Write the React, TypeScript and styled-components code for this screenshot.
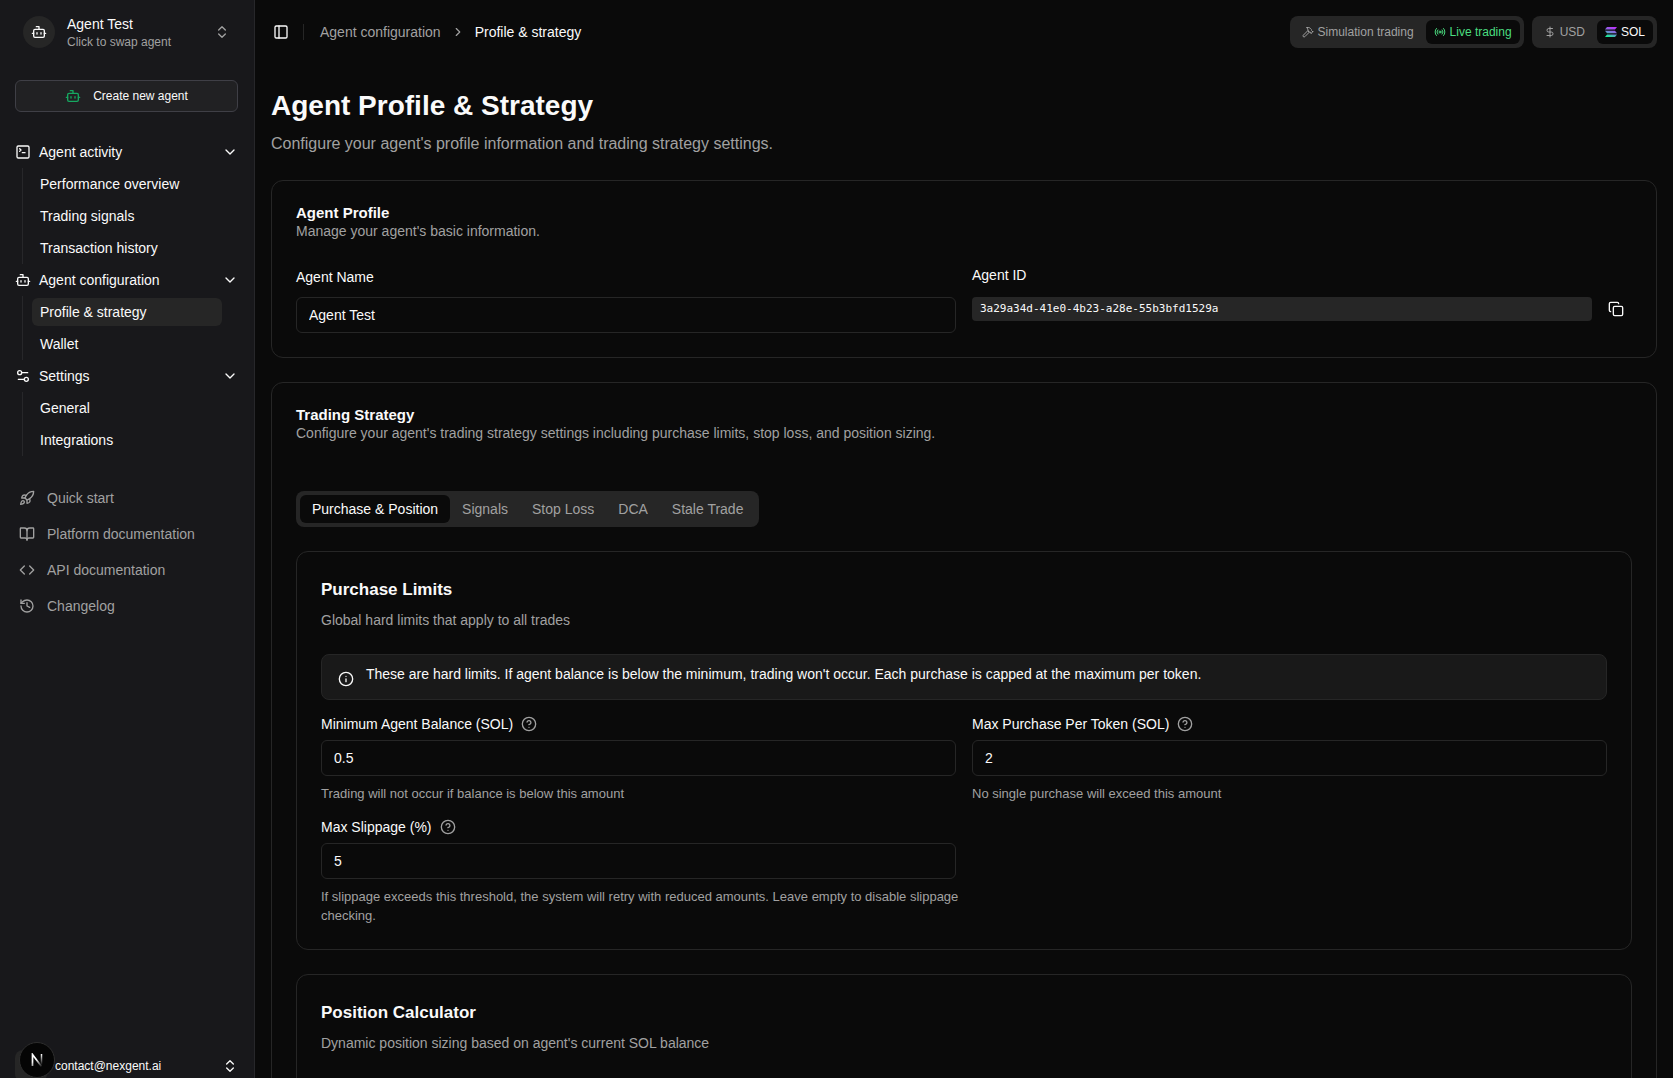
import React, { useState } from "react";
import styled, { createGlobalStyle, css } from "styled-components";
import {
  BookOpen,
  Bot,
  ChevronDown,
  ChevronRight,
  ChevronsUpDown,
  CircleHelp,
  Code,
  Copy,
  DollarSign,
  Hammer,
  History,
  Info,
  PanelLeft,
  Radio,
  Rocket,
  Settings2,
  SquareTerminal,
} from "lucide-react";

const color = {
  page: "#0a0a0a",
  sidebar: "#18181b",
  sidebarBorder: "#27272a",
  border: "#262626",
  muted: "#262626",
  text: "#fafafa",
  dim: "#a1a1a1",
  green: "#4ade80",
};

const GlobalStyle = createGlobalStyle`
  *, *::before, *::after { box-sizing: border-box; }
  body {
    margin: 0;
    background: ${color.page};
    color: ${color.text};
    font-family: "Liberation Sans", Arial, sans-serif;
    font-size: 14px;
    line-height: 20px;
  }
  h1, h2, h3, p, ul { margin: 0; padding: 0; }
  ul { list-style: none; }
  a { color: inherit; text-decoration: none; }
  button, input { font: inherit; color: inherit; }
  button { border: 0; padding: 0; background: none; cursor: pointer; }
  svg { flex: none; display: block; }
`;

const Shell = styled.div`
  display: flex;
  height: 100vh;
  overflow: hidden;
`;

/* Sidebar */

const Sidebar = styled.aside`
  display: flex;
  flex-direction: column;
  flex: none;
  width: 255px;
  padding: 8px 16px 0 15px;
  overflow: hidden;
  background: ${color.sidebar};
  border-right: 1px solid ${color.sidebarBorder};
`;

const AgentSwitcher = styled.button`
  display: flex;
  align-items: center;
  gap: 12px;
  width: 100%;
  height: 48px;
  padding: 0 8px;
  text-align: left;
  > svg { color: ${color.dim}; }
`;

const AgentAvatar = styled.span`
  display: grid;
  place-items: center;
  width: 32px;
  height: 32px;
  border-radius: 50%;
  background: ${color.muted};
`;

const AgentText = styled.span`
  display: flex;
  flex-direction: column;
  flex: 1;
  small {
    font-size: 12px;
    line-height: 16px;
    color: ${color.dim};
  }
`;

const CreateButton = styled.button`
  display: flex;
  align-items: center;
  justify-content: center;
  gap: 12px;
  flex: none;
  height: 32px;
  margin: 24px 0;
  font-size: 12px;
  border: 1px solid #3f3f46;
  border-radius: 6px;
  background: #212123;
  svg { color: #16a860; }
`;

const NavHeader = styled.button`
  display: flex;
  align-items: center;
  gap: 8px;
  width: 100%;
  height: 32px;
  text-align: left;
  span { flex: 1; }
`;

const SubNav = styled.ul`
  display: flex;
  flex-direction: column;
  gap: 4px;
  margin: 0 16px 0 7px;
  padding: 2px 0 2px 9px;
  border-left: 1px solid ${color.sidebarBorder};
`;

const SubLink = styled.a<{ $active?: boolean }>`
  display: flex;
  align-items: center;
  height: 28px;
  padding: 0 8px;
  border-radius: 6px;
  background: ${(p) => (p.$active ? color.muted : "transparent")};
`;

const HelpLinks = styled.nav`
  display: flex;
  flex-direction: column;
  gap: 4px;
  margin-top: 26px;
  color: ${color.dim};
`;

const HelpLink = styled.a`
  display: flex;
  align-items: center;
  gap: 12px;
  height: 32px;
  padding: 0 4px;
`;

const Account = styled.button`
  display: flex;
  align-items: center;
  gap: 8px;
  flex: none;
  height: 24px;
  margin-top: auto;
  font-size: 12px;
  text-align: left;
  > span:nth-child(2) { flex: 1; }
`;

const AccountAvatar = styled.span`
  flex: none;
  width: 32px;
  height: 32px;
  border-radius: 8px;
  background: ${color.muted};
`;

const DevBadge = styled.button`
  position: fixed;
  left: 19px;
  bottom: 0;
  display: grid;
  place-items: center;
  width: 36px;
  height: 36px;
  border: 1px solid #2e2e2e;
  border-radius: 50%;
  background: #050505;
`;

/* Top bar */

const Main = styled.div`
  flex: 1;
  min-width: 0;
  overflow-y: auto;
  scrollbar-width: none;
`;

const TopBar = styled.header`
  display: flex;
  align-items: center;
  height: 64px;
  padding: 0 16px 0 12px;
`;

const IconButton = styled.button<{ $size: number }>`
  display: grid;
  place-items: center;
  flex: none;
  width: ${(p) => p.$size}px;
  height: ${(p) => p.$size}px;
  border-radius: 6px;
`;

const Divider = styled.span`
  width: 1px;
  height: 16px;
  margin: 0 16px 0 8px;
  background: ${color.border};
`;

const Breadcrumb = styled.nav`
  display: flex;
  align-items: center;
  gap: 10px;
  flex: 1;
  color: ${color.dim};
  > span { color: ${color.text}; }
`;

const Segments = styled.div`
  display: flex;
  gap: 4px;
  height: 32px;
  margin-left: 8px;
  padding: 4px;
  border-radius: 8px;
  background: ${color.muted};
`;

const Segment = styled.button<{ $active?: boolean; $tone?: string }>`
  display: flex;
  align-items: center;
  gap: 4px;
  padding: 0 8px;
  font-size: 12px;
  border-radius: 6px;
  color: ${color.dim};
  ${(p) =>
    p.$active &&
    css`
      background: ${color.page};
      color: ${p.$tone ?? color.text};
    `}
`;

/* Content */

const Content = styled.main`
  display: flex;
  flex-direction: column;
  gap: 24px;
  padding: 24px 16px;
`;

const PageTitle = styled.h1`
  font-size: 28px;
  line-height: 36px;
  font-weight: 700;
`;

const PageLead = styled.p`
  margin-top: 8px;
  font-size: 16px;
  line-height: 24px;
  color: ${color.dim};
`;

const Card = styled.section`
  padding: 24px;
  border: 1px solid ${color.border};
  border-radius: 12px;
`;

const CardTitle = styled.h2`
  font-size: 15px;
  line-height: 16px;
  font-weight: 700;
`;

const PanelTitle = styled.h3`
  margin-bottom: 6px;
  font-size: 17px;
  line-height: 28px;
  font-weight: 700;
`;

const Description = styled.p`
  margin-bottom: 24px;
  color: ${color.dim};
`;

const Columns = styled.div`
  display: grid;
  grid-template-columns: 1fr 1fr;
  gap: 16px;
`;

const Field = styled.div`
  display: flex;
  flex-direction: column;
  gap: 8px;
  min-width: 0;
`;

const NameLabel = styled.label`
  line-height: 24px;
`;

const LabelRow = styled.div`
  display: flex;
  align-items: center;
  gap: 8px;
  height: 16px;
  svg { color: ${color.dim}; }
`;

const TextInput = styled.input`
  width: 100%;
  height: 36px;
  padding: 0 12px;
  border: 1px solid ${color.border};
  border-radius: 6px;
  background: transparent;
  outline: none;
`;

/* Hints may run a little into the column gap before they wrap. */
const Hint = styled.p`
  margin-right: -8px;
  font-size: 13px;
  line-height: 19px;
  color: ${color.dim};
`;

const IdRow = styled.div`
  display: flex;
  align-items: center;
  gap: 8px;
  height: 32px;
`;

const AgentId = styled.code`
  flex: 1;
  min-width: 0;
  padding: 4px 8px;
  font-family: "DejaVu Sans Mono", monospace;
  font-size: 11px;
  line-height: 16px;
  border-radius: 4px;
  background: ${color.muted};
`;

const Tabs = styled.div`
  display: inline-flex;
  height: 36px;
  margin: 24px 0;
  padding: 4px;
  border-radius: 8px;
  background: ${color.muted};
`;

const Tab = styled.button<{ $active: boolean }>`
  padding: 0 12px;
  border-radius: 6px;
  background: ${(p) => (p.$active ? color.page : "transparent")};
  color: ${(p) => (p.$active ? color.text : color.dim)};
`;

const Panels = styled.div`
  display: flex;
  flex-direction: column;
  gap: 24px;
`;

const Notice = styled.div`
  display: flex;
  gap: 12px;
  min-height: 46px;
  margin-bottom: 16px;
  padding: 9px 16px 12px;
  border: 1px solid ${color.border};
  border-radius: 8px;
  background: #191919;
  svg { align-self: flex-end; }
`;

const navigation = [
  {
    title: "Agent activity",
    icon: SquareTerminal,
    items: ["Performance overview", "Trading signals", "Transaction history"],
  },
  {
    title: "Agent configuration",
    icon: Bot,
    items: ["Profile & strategy", "Wallet"],
  },
  { title: "Settings", icon: Settings2, items: ["General", "Integrations"] },
];

const helpLinks = [
  { title: "Quick start", icon: Rocket },
  { title: "Platform documentation", icon: BookOpen },
  { title: "API documentation", icon: Code },
  { title: "Changelog", icon: History },
];

const tabNames = ["Purchase & Position", "Signals", "Stop Loss", "DCA", "Stale Trade"];

const limits = [
  {
    id: "min-balance",
    label: "Minimum Agent Balance (SOL)",
    value: "0.5",
    hint: "Trading will not occur if balance is below this amount",
  },
  {
    id: "max-purchase",
    label: "Max Purchase Per Token (SOL)",
    value: "2",
    hint: "No single purchase will exceed this amount",
  },
  {
    id: "max-slippage",
    label: "Max Slippage (%)",
    value: "5",
    hint: "If slippage exceeds this threshold, the system will retry with reduced amounts. Leave empty to disable slippage checking.",
  },
];

function SolanaLogo() {
  return (
    <svg width="12" height="12" viewBox="0 0 24 24" aria-hidden="true">
      <defs>
        <linearGradient id="sol" x1="16" y1="1" x2="8" y2="23" gradientUnits="userSpaceOnUse">
          <stop offset="0" stopColor="#c02eff" />
          <stop offset="0.5" stopColor="#7a7bd8" />
          <stop offset="1" stopColor="#14f195" />
        </linearGradient>
      </defs>
      <g fill="url(#sol)">
        <path d="M4 2h20l-4 5H0z" />
        <path d="M0 9.500h20l4 5H4z" />
        <path d="M4 17h20l-4 5H0z" />
      </g>
    </svg>
  );
}

function NextLogo() {
  return (
    <svg width="14" height="14" viewBox="0 0 14 14" fill="none" aria-hidden="true">
      <defs>
        <linearGradient id="next-diagonal" x1="7" y1="6" x2="12" y2="14" gradientUnits="userSpaceOnUse">
          <stop stopColor="#fff" />
          <stop offset="1" stopColor="#fff" stopOpacity="0" />
        </linearGradient>
        <linearGradient id="next-bar" x1="11" y1="1" x2="11" y2="12" gradientUnits="userSpaceOnUse">
          <stop stopColor="#fff" />
          <stop offset="1" stopColor="#fff" stopOpacity="0" />
        </linearGradient>
      </defs>
      <path d="M2.500 13V1.500L11.500 13.500" stroke="url(#next-diagonal)" strokeWidth="1.700" />
      <path d="M11.500 1v11" stroke="url(#next-bar)" strokeWidth="1.500" />
    </svg>
  );
}

export default function App() {
  const [tab, setTab] = useState(tabNames[0]);

  return (
    <Shell>
      <GlobalStyle />
      <Sidebar>
        <AgentSwitcher type="button">
          <AgentAvatar>
            <Bot size={16} />
          </AgentAvatar>
          <AgentText>
            Agent Test
            <small>Click to swap agent</small>
          </AgentText>
          <ChevronsUpDown size={16} />
        </AgentSwitcher>

        <CreateButton type="button">
          <Bot size={16} />
          Create new agent
        </CreateButton>

        <nav>
          {navigation.map(({ title, icon: Icon, items }) => (
            <div key={title}>
              <NavHeader type="button">
                <Icon size={16} />
                <span>{title}</span>
                <ChevronDown size={16} />
              </NavHeader>
              <SubNav>
                {items.map((item) => (
                  <li key={item}>
                    <SubLink href="#" $active={item === "Profile & strategy"}>
                      {item}
                    </SubLink>
                  </li>
                ))}
              </SubNav>
            </div>
          ))}
        </nav>

        <HelpLinks>
          {helpLinks.map(({ title, icon: Icon }) => (
            <HelpLink key={title} href="#">
              <Icon size={16} />
              {title}
            </HelpLink>
          ))}
        </HelpLinks>

        <Account type="button">
          <AccountAvatar />
          <span>contact@nexgent.ai</span>
          <ChevronsUpDown size={16} />
        </Account>
      </Sidebar>

      <Main>
        <TopBar>
          <IconButton type="button" $size={28} aria-label="Toggle sidebar">
            <PanelLeft size={16} />
          </IconButton>
          <Divider />
          <Breadcrumb>
            <a href="#">Agent configuration</a>
            <ChevronRight size={14} />
            <span>Profile &amp; strategy</span>
          </Breadcrumb>
          <Segments>
            <Segment type="button">
              <Hammer size={12} />
              Simulation trading
            </Segment>
            <Segment type="button" $active $tone={color.green}>
              <Radio size={12} />
              Live trading
            </Segment>
          </Segments>
          <Segments>
            <Segment type="button">
              <DollarSign size={12} />
              USD
            </Segment>
            <Segment type="button" $active>
              <SolanaLogo />
              SOL
            </Segment>
          </Segments>
        </TopBar>

        <Content>
          <div>
            <PageTitle>Agent Profile &amp; Strategy</PageTitle>
            <PageLead>
              Configure your agent's profile information and trading strategy settings.
            </PageLead>
          </div>

          <Card>
            <CardTitle>Agent Profile</CardTitle>
            <Description>Manage your agent's basic information.</Description>
            <Columns>
              <Field>
                <NameLabel htmlFor="agent-name">Agent Name</NameLabel>
                <TextInput id="agent-name" defaultValue="Agent Test" />
              </Field>
              <Field>
                <span>Agent ID</span>
                <IdRow>
                  <AgentId>3a29a34d-41e0-4b23-a28e-55b3bfd1529a</AgentId>
                  <IconButton type="button" $size={32} aria-label="Copy agent ID">
                    <Copy size={16} />
                  </IconButton>
                </IdRow>
              </Field>
            </Columns>
          </Card>

          <Card>
            <CardTitle>Trading Strategy</CardTitle>
            <Description>
              Configure your agent's trading strategy settings including purchase limits, stop loss,
              and position sizing.
            </Description>
            <Tabs role="tablist">
              {tabNames.map((name) => (
                <Tab
                  key={name}
                  type="button"
                  role="tab"
                  aria-selected={tab === name}
                  $active={tab === name}
                  onClick={() => setTab(name)}
                >
                  {name}
                </Tab>
              ))}
            </Tabs>

            <Panels>
              <Card>
                <PanelTitle>Purchase Limits</PanelTitle>
                <Description>Global hard limits that apply to all trades</Description>
                <Notice role="note">
                  <Info size={16} />
                  <p>
                    These are hard limits. If agent balance is below the minimum, trading won't
                    occur. Each purchase is capped at the maximum per token.
                  </p>
                </Notice>
                <Columns>
                  {limits.map((limit) => (
                    <Field key={limit.id}>
                      <LabelRow>
                        <label htmlFor={limit.id}>{limit.label}</label>
                        <CircleHelp size={16} />
                      </LabelRow>
                      <TextInput id={limit.id} inputMode="decimal" defaultValue={limit.value} />
                      <Hint>{limit.hint}</Hint>
                    </Field>
                  ))}
                </Columns>
              </Card>

              <Card>
                <PanelTitle>Position Calculator</PanelTitle>
                <Description>Dynamic position sizing based on agent's current SOL balance</Description>
              </Card>
            </Panels>
          </Card>
        </Content>
      </Main>

      <DevBadge type="button" aria-label="Open developer tools">
        <NextLogo />
      </DevBadge>
    </Shell>
  );
}
